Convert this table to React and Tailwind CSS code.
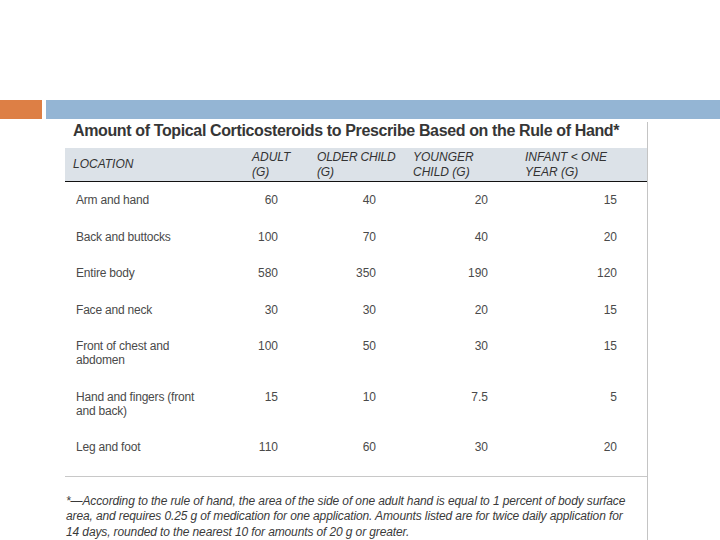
import React from "react";

const rows = [
  { loc: ["Arm and hand"], v: ["60", "40", "20", "15"] },
  { loc: ["Back and buttocks"], v: ["100", "70", "40", "20"] },
  { loc: ["Entire body"], v: ["580", "350", "190", "120"] },
  { loc: ["Face and neck"], v: ["30", "30", "20", "15"] },
  { loc: ["Front of chest and", "abdomen"], v: ["100", "50", "30", "15"] },
  { loc: ["Hand and fingers (front", "and back)"], v: ["15", "10", "7.5", "5"] },
  { loc: ["Leg and foot"], v: ["110", "60", "30", "20"] },
];

export default function App() {
  return (
    <div className="w-[720px] h-[540px] bg-white overflow-hidden font-['Liberation_Sans',Arial,sans-serif]">
      <div className="h-[100px]" />
      <div className="flex h-[19px] gap-[4px]">
        <div className="w-[42px] bg-[#dd7f45]" />
        <div className="flex-1 bg-[#94b5d4]" />
      </div>
      <div className="ml-[65px] mt-[3px] w-[583px] h-[418px] border-r border-[#c4c4c4]">
        <div className="pl-[8px] text-[16px] leading-[18px] font-bold text-[#363636] whitespace-nowrap tracking-[-0.37px]">
          Amount of Topical Corticosteroids to Prescribe Based on the Rule of Hand*
        </div>
        <div className="mt-[8px] grid grid-cols-[187px_65px_96px_112px_1fr] bg-[#dce2e8] border-b border-[#111] text-[12px] leading-[14.5px] italic uppercase text-[#333] py-[2px]">
          <div className="pl-[8px] self-center">Location</div>
          <div>Adult<br />(G)</div>
          <div className="tracking-[-0.2px]">Older child<br />(G)</div>
          <div>Younger<br />child (G)</div>
          <div>Infant &lt; one<br />year (G)</div>
        </div>
        <div className="text-[12px] leading-[14px] text-[#4a4a4a]">
          {rows.map((r, i) => (
            <div key={i} className="grid grid-cols-[187px_65px_96px_112px_1fr] py-[11.25px]">
              <div className="pl-[11px] tracking-[-0.2px]">
                {r.loc.map((l, j) => (
                  <div key={j}>{l}</div>
                ))}
              </div>
              <div className="text-right pr-[39px]">{r.v[0]}</div>
              <div className="text-right pr-[37px]">{r.v[1]}</div>
              <div className="text-right pr-[37px]">{r.v[2]}</div>
              <div className="text-right pr-[30px]">{r.v[3]}</div>
            </div>
          ))}
        </div>
        <div className="mt-[10px] border-t border-[#c8c8c8]" />
        <div className="mt-[17px] pl-[1px] text-[12px] leading-[15.5px] italic text-[#3a3a3a] whitespace-nowrap tracking-[-0.12px]">
          <div>*—According to the rule of hand, the area of the side of one adult hand is equal to 1 percent of body surface</div>
          <div>area, and requires 0.25 g of medication for one application. Amounts listed are for twice daily application for</div>
          <div>14 days, rounded to the nearest 10 for amounts of 20 g or greater.</div>
        </div>
      </div>
    </div>
  );
}
